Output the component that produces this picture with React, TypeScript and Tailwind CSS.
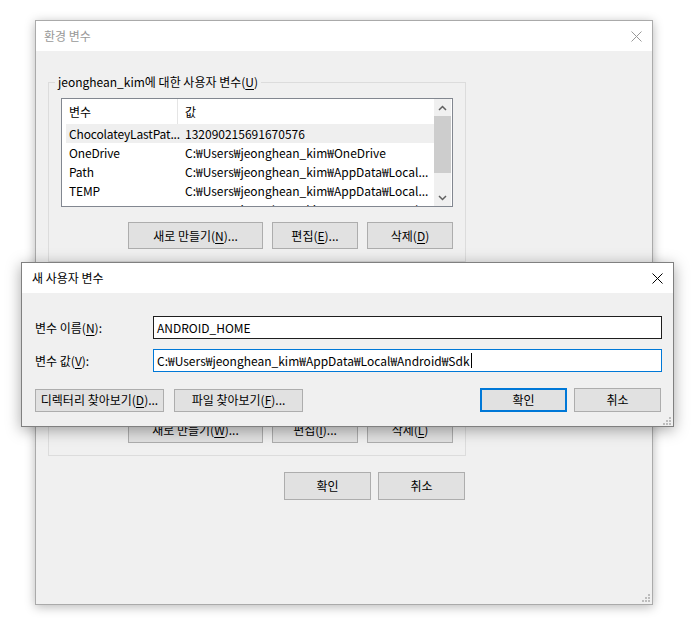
import React from "react";

const FONT = "font-['Noto_Sans_CJK_KR','Noto_Sans',sans-serif]";

function U({ children }: { children: React.ReactNode }) {
  return <span className="underline underline-offset-[2px]">{children}</span>;
}

function CloseX({ color }: { color: string }) {
  return (
    <svg width="11" height="11" viewBox="0 0 11 11">
      <path d="M0.5 0.5 L10.5 10.5 M10.5 0.5 L0.5 10.5" stroke={color} strokeWidth="1" />
    </svg>
  );
}

function Grip() {
  return (
    <svg width="8" height="8" viewBox="0 0 8 8">
      <rect x="6" y="0" width="2" height="2" fill="#bdbdbd" />
      <rect x="3" y="3" width="2" height="2" fill="#bdbdbd" />
      <rect x="6" y="3" width="2" height="2" fill="#bdbdbd" />
      <rect x="0" y="6" width="2" height="2" fill="#bdbdbd" />
      <rect x="3" y="6" width="2" height="2" fill="#bdbdbd" />
      <rect x="6" y="6" width="2" height="2" fill="#bdbdbd" />
    </svg>
  );
}

function Btn({
  children,
  className,
  def,
}: {
  children: React.ReactNode;
  className: string;
  def?: boolean;
}) {
  return (
    <div
      className={
        "flex items-center justify-center bg-[#e1e1e1] text-[12px] leading-none text-black " +
        (def ? "border-2 border-[#0078d7] " : "border border-[#adadad] ") +
        className
      }
    >
      {children}
    </div>
  );
}

type Row = [string, string];

function ListView({ rows, selected }: { rows: Row[]; selected: number }) {
  return (
    <div className="relative flex h-[109px] w-[392px] overflow-hidden border border-[#828790] bg-white">
      <div className="flex min-w-0 flex-1 flex-col">
        <div className="flex h-[25px] shrink-0 items-center text-[12px] text-black">
          <div className="flex h-full w-[116px] shrink-0 items-center border-r border-[#e5e5e5] pl-[7px]">변수</div>
          <div className="pl-[7px]">값</div>
        </div>
        {rows.map((r, i) => (
          <div
            key={i}
            className={
              "ml-[4px] flex h-[19px] shrink-0 items-center whitespace-nowrap text-[12px] text-black " +
              (i === selected ? "bg-[#efefef]" : "")
            }
          >
            <div className="w-[112px] shrink-0 pl-[3px] tracking-[-0.15px]">{r[0]}</div>
            <div className="pl-[7px]">{r[1]}</div>
          </div>
        ))}
      </div>
      <div className="mr-[1px] flex w-[17px] shrink-0 flex-col bg-[#f0f0f0]">
        <div className="flex h-[17px] items-center justify-center">
          <svg width="9" height="6" viewBox="0 0 9 6">
            <path d="M1 5 L4.5 1.5 L8 5" stroke="#606060" strokeWidth="1.5" fill="none" />
          </svg>
        </div>
        <div className="h-[57px] bg-[#cdcdcd]" />
        <div className="flex-1" />
        <div className="flex h-[17px] items-center justify-center">
          <svg width="9" height="6" viewBox="0 0 9 6">
            <path d="M1 1 L4.5 4.5 L8 1" stroke="#606060" strokeWidth="1.5" fill="none" />
          </svg>
        </div>
      </div>
    </div>
  );
}

function GroupBox({
  label,
  rows,
  btns,
  className,
}: {
  label: React.ReactNode;
  rows: Row[];
  btns: [React.ReactNode, React.ReactNode, React.ReactNode];
  className?: string;
}) {
  return (
    <div className={"relative w-[418px] border border-[#dcdcdc] px-[12px] pb-[12px] pt-[15px] " + (className ?? "")}>
      <div className="absolute left-[6px] top-[-9px] whitespace-nowrap bg-[#f0f0f0] px-[3px] text-[12px] leading-[16px] text-black">
        {label}
      </div>
      <ListView rows={rows} selected={0} />
      <div className="mt-[15px] flex justify-end gap-[9px]">
        <Btn className="h-[27px] w-[135px]">{btns[0]}</Btn>
        <Btn className="h-[27px] w-[86px]">{btns[1]}</Btn>
        <Btn className="h-[27px] w-[86px]">{btns[2]}</Btn>
      </div>
    </div>
  );
}

export default function App() {
  const userRows: Row[] = [
    ["ChocolateyLastPat...", "132090215691670576"],
    ["OneDrive", "C:₩Users₩jeonghean_kim₩OneDrive"],
    ["Path", "C:₩Users₩jeonghean_kim₩AppData₩Local..."],
    ["TEMP", "C:₩Users₩jeonghean_kim₩AppData₩Local..."],
    ["TMP", "C:₩Users₩jeonghean_kim₩AppData₩Local..."],
  ];
  const sysRows: Row[] = [
    ["ChocolateyInstall", "C:₩ProgramData₩chocolatey"],
    ["ComSpec", "C:₩WINDOWS₩system32₩cmd.exe"],
    ["DriverData", "C:₩Windows₩System32₩Drivers₩DriverData"],
    ["NUMBER_OF_PR...", "8"],
    ["OS", "Windows_NT"],
  ];

  return (
    <div className={"relative h-[638px] w-[700px] overflow-hidden bg-white " + FONT}>
      {/* Background window: 환경 변수 */}
      <div className="absolute left-[35px] top-[20px] flex h-[585px] w-[618px] flex-col border border-[#aaaaaa] bg-[#f0f0f0] shadow-[0_2px_10px_rgba(0,0,0,0.28)]">
        <div className="flex h-[30px] shrink-0 items-center justify-between bg-white pl-[8px] pr-[10px]">
          <span className="text-[12px] text-[#999999]">환경 변수</span>
          <CloseX color="#999999" />
        </div>
        <div className="flex flex-1 flex-col pl-[12px] pt-[31px]">
          <GroupBox
            label={
              <>
                jeonghean_kim에 대한 사용자 변수(<U>U</U>)
              </>
            }
            rows={userRows}
            btns={[
              <>
                새로 만들기(<U>N</U>)...
              </>,
              <>
                편집(<U>E</U>)...
              </>,
              <>
                삭제(<U>D</U>)
              </>,
            ]}
          />
          <GroupBox
            className="mt-[14px]"
            label={
              <>
                시스템 변수(<U>S</U>)
              </>
            }
            rows={sysRows}
            btns={[
              <>
                새로 만들기(<U>W</U>)...
              </>,
              <>
                편집(<U>I</U>)...
              </>,
              <>
                삭제(<U>L</U>)
              </>,
            ]}
          />
          <div className="mt-[16px] flex w-[417px] justify-end gap-[7px]">
            <Btn className="h-[28px] w-[87px]">확인</Btn>
            <Btn className="h-[28px] w-[87px]">취소</Btn>
          </div>
          <div className="flex-1" />
          <div className="flex justify-end pb-[2px] pr-[2px]">
            <Grip />
          </div>
        </div>
      </div>

      {/* Front dialog: 새 사용자 변수 */}
      <div className="absolute left-[21px] top-[262px] flex h-[165px] w-[653px] flex-col border border-[#808080] bg-[#f0f0f0] shadow-[0_3px_14px_rgba(0,0,0,0.35)]">
        <div className="flex h-[30px] shrink-0 items-center justify-between bg-white pl-[10px] pr-[10px]">
          <span className="text-[12px] text-black">새 사용자 변수</span>
          <CloseX color="#000000" />
        </div>
        <div className="relative flex flex-1 flex-col pl-[13px] pr-[11px] pt-[23px]">
          <div className="grid grid-cols-[118px_1fr] items-center gap-y-[10px] text-[12px] text-black">
            <div>
              변수 이름(<U>N</U>):
            </div>
            <div className="flex h-[23px] items-center border border-[#1e1e1e] bg-white pl-[3px]">ANDROID_HOME</div>
            <div>
              변수 값(<U>V</U>):
            </div>
            <div className="flex h-[23px] items-center whitespace-nowrap border border-[#0078d7] bg-white pl-[3px]">
              C:₩Users₩jeonghean_kim₩AppData₩Local₩Android₩Sdk
              <span className="ml-[1px] inline-block h-[15px] w-[1px] bg-black" />
            </div>
          </div>
          <div className="mt-[16px] flex items-center pr-[1px]">
            <Btn className="h-[23px] w-[129px]">
              디렉터리 찾아보기(<U>D</U>)...
            </Btn>
            <Btn className="ml-[10px] h-[23px] w-[129px]">
              파일 찾아보기(<U>F</U>)...
            </Btn>
            <div className="flex-1" />
            <Btn def className="h-[24px] w-[87px]">
              확인
            </Btn>
            <Btn className="ml-[7px] h-[24px] w-[87px]">취소</Btn>
          </div>
          <div className="flex-1" />
          <div className="mr-[-9px] flex justify-end pb-[1px]">
            <Grip />
          </div>
        </div>
      </div>
    </div>
  );
}
